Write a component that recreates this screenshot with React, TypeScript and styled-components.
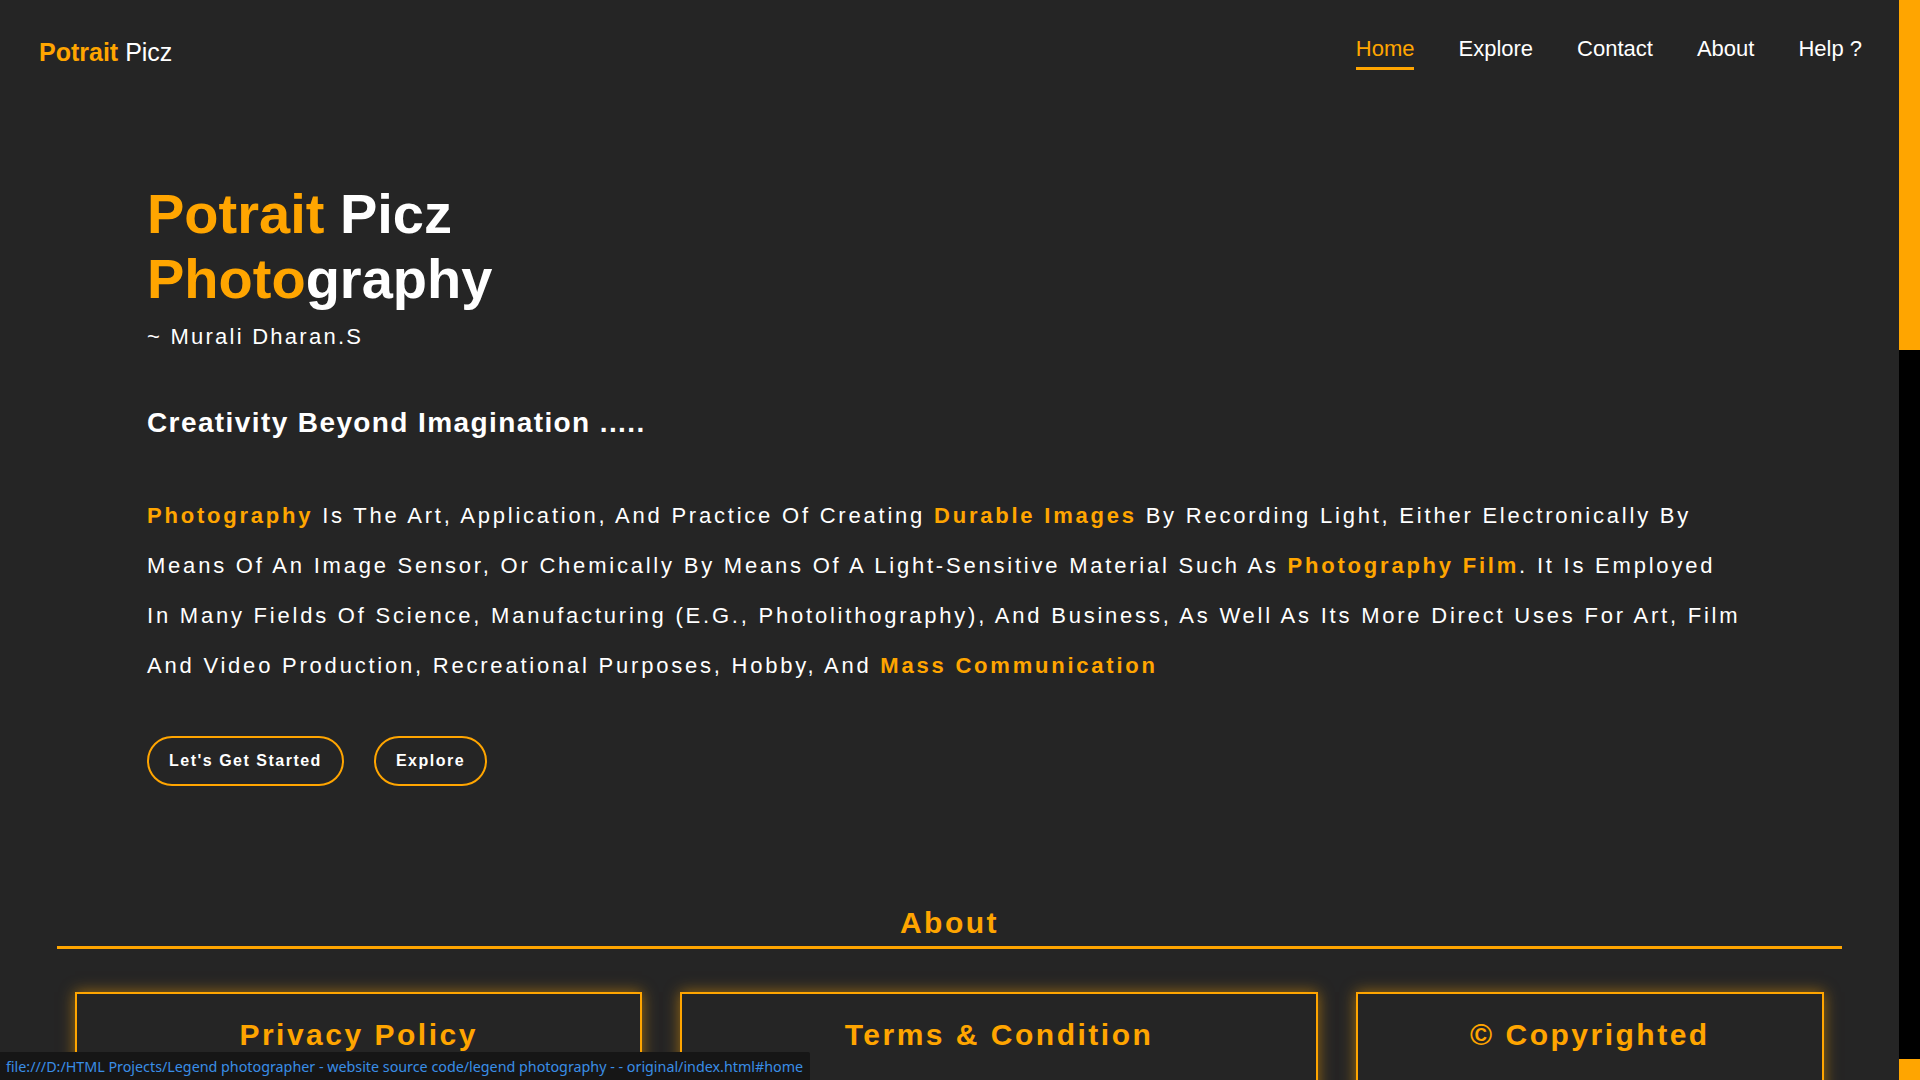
import React from "react";
import styled, { createGlobalStyle } from "styled-components";

const ORANGE = "#ffa500";
const BG = "#252525";

const GlobalStyle = createGlobalStyle`
  html {
    scrollbar-width: none;
  }
  html::-webkit-scrollbar {
    display: none;
  }
  body {
    margin: 0;
    background: ${BG};
    color: #fff;
    font-family: "Liberation Sans", Arial, sans-serif;
  }
  * {
    box-sizing: border-box;
  }
`;

const Page = styled.div`
  min-height: 3268px;
  margin-right: 21px;
  background: ${BG};
`;

const Header = styled.header`
  display: flex;
  justify-content: space-between;
  align-items: flex-start;
  padding: 36px 37px 0 39px;
`;

const Logo = styled.a`
  margin-top: 2px;
  font-size: 25px;
  color: #fff;
  text-decoration: none;
  line-height: normal;
`;

const Accent = styled.span<{ $bold?: boolean }>`
  color: ${ORANGE};
  font-weight: ${(p) => (p.$bold ? 700 : "inherit")};
`;

const Nav = styled.nav`
  display: flex;
  gap: 44px;
`;

const NavLink = styled.a<{ $active?: boolean }>`
  font-size: 22px;
  line-height: normal;
  color: ${(p) => (p.$active ? ORANGE : "#fff")};
  text-decoration: none;
  padding-bottom: 5px;
  border-bottom: 3px solid ${(p) => (p.$active ? ORANGE : "transparent")};
`;

const Hero = styled.section`
  padding: 111px 156px 0 147px;
`;

const Title = styled.h1`
  margin: 0;
  font-size: 56px;
  font-weight: 700;
  line-height: normal;
  color: #fff;
`;

const Author = styled.p`
  margin: 13px 0 0 0;
  font-size: 22px;
  letter-spacing: 2.25px;
  line-height: normal;
`;

const Tagline = styled.h2`
  margin: 57px 0 0 0;
  font-size: 28px;
  font-weight: 700;
  letter-spacing: 1.4px;
  line-height: normal;
`;

const Description = styled.p`
  margin: 52px 0 0 0;
  font-size: 22px;
  line-height: 50px;
  letter-spacing: 2.78px;
  text-transform: capitalize;
`;

const Highlight = styled.b`
  color: ${ORANGE};
  font-weight: 700;
`;

const Actions = styled.div`
  display: flex;
  gap: 30px;
  margin-top: 45px;
`;

const PillButton = styled.a`
  display: inline-flex;
  align-items: center;
  height: 50px;
  padding: 0 20px;
  border: 2px solid ${ORANGE};
  border-radius: 25px;
  color: #fff;
  font-size: 16px;
  font-weight: 700;
  letter-spacing: 1.5px;
  text-decoration: none;
`;

const AboutSection = styled.section`
  margin-top: 120px;
`;

const SectionHeading = styled.h2`
  width: 94%;
  margin: 0 auto;
  padding-bottom: 6px;
  border-bottom: 3px solid ${ORANGE};
  text-align: center;
  color: ${ORANGE};
  font-size: 30px;
  font-weight: 700;
  letter-spacing: 2.5px;
  line-height: normal;
`;

const CardRow = styled.div`
  width: 94%;
  margin: 43px auto 0 auto;
  padding: 0 18px;
  display: grid;
  grid-template-columns: 567fr 638fr 468fr;
  gap: 37.5px;
`;

const Card = styled.div`
  min-height: 420px;
  padding: 24px 20px;
  border: 2px solid ${ORANGE};
  box-shadow: 0 0 14px rgba(255, 165, 0, 0.55);
`;

const CardTitle = styled.h3`
  margin: 0;
  text-align: center;
  color: ${ORANGE};
  font-size: 30px;
  font-weight: 700;
  letter-spacing: 2.5px;
  line-height: normal;
`;

const StatusBubble = styled.div`
  position: fixed;
  left: 0;
  bottom: 0;
  height: 28px;
  display: flex;
  align-items: center;
  padding: 0 7px 0 6px;
  background: #161616;
  color: #3a8ee6;
  font-family: "Noto Sans", "Open Sans", sans-serif;
  font-size: 14.3px;
  white-space: nowrap;
  border-top-right-radius: 2px;
`;

const ScrollRail = styled.div`
  position: fixed;
  top: 0;
  right: 0;
  bottom: 0;
  width: 21px;
  display: flex;
  flex-direction: column;
  background: #000;
`;

const ScrollThumb = styled.div`
  height: 350px;
  background: ${ORANGE};
`;

const ScrollTrack = styled.div`
  flex: 1;
`;

const ScrollButton = styled.div`
  height: 21px;
  background: ${ORANGE};
`;

export default function App() {
  return (
    <Page>
      <GlobalStyle />
      <Header>
        <Logo href="#home">
          <Accent $bold>Potrait</Accent> Picz
        </Logo>
        <Nav>
          <NavLink href="#home" $active>
            Home
          </NavLink>
          <NavLink href="#explore">Explore</NavLink>
          <NavLink href="#contact">Contact</NavLink>
          <NavLink href="#about">About</NavLink>
          <NavLink href="#help">Help ?</NavLink>
        </Nav>
      </Header>

      <Hero id="home">
        <Title>
          <Accent>Potrait</Accent> Picz
          <br />
          <Accent>Photo</Accent>graphy
        </Title>
        <Author>~ Murali Dharan.S</Author>
        <Tagline>Creativity Beyond Imagination .....</Tagline>
        <Description>
          <Highlight>Photography</Highlight> is the art, application, and practice of creating{" "}
          <Highlight>durable images</Highlight> by recording light, either electronically by
          means of an image sensor, or chemically by means of a light-sensitive material such as{" "}
          <Highlight>photography film</Highlight>. It is employed in many fields of science,
          manufacturing (e.g., photolithography), and business, as well as its more direct uses
          for art, film and video production, recreational purposes, hobby, and{" "}
          <Highlight>mass communication</Highlight>
        </Description>
        <Actions>
          <PillButton href="#start">Let's Get Started</PillButton>
          <PillButton href="#explore">Explore</PillButton>
        </Actions>
      </Hero>

      <AboutSection id="about">
        <SectionHeading>About</SectionHeading>
        <CardRow>
          <Card>
            <CardTitle>Privacy Policy</CardTitle>
          </Card>
          <Card>
            <CardTitle>Terms &amp; Condition</CardTitle>
          </Card>
          <Card>
            <CardTitle>© Copyrighted</CardTitle>
          </Card>
        </CardRow>
      </AboutSection>

      <StatusBubble>
        file:///D:/HTML Projects/Legend photographer - website source code/legend photography - - original/index.html#home
      </StatusBubble>

      <ScrollRail aria-hidden="true">
        <ScrollThumb />
        <ScrollTrack />
        <ScrollButton />
      </ScrollRail>
    </Page>
  );
}
